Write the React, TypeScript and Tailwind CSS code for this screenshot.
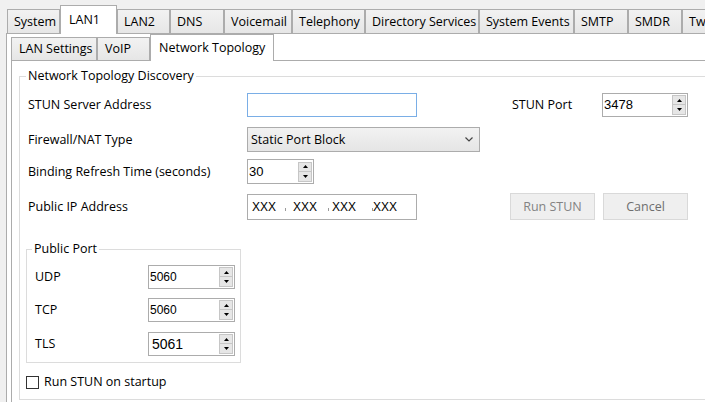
import React from "react";

const topTabs = [
  { label: "System", w: "w-[53px]", sel: false },
  { label: "LAN1", w: "w-[57px]", sel: true },
  { label: "LAN2", w: "w-[53px]", sel: false },
  { label: "DNS", w: "w-[54px]", sel: false },
  { label: "Voicemail", w: "w-[68px]", sel: false },
  { label: "Telephony", w: "w-[73px]", sel: false },
  { label: "Directory Services", w: "w-[114px]", sel: false },
  { label: "System Events", w: "w-[95px]", sel: false },
  { label: "SMTP", w: "w-[54px]", sel: false },
  { label: "SMDR", w: "w-[54px]", sel: false },
  { label: "Twinning", w: "w-[80px]", sel: false },
];

const innerTabs = [
  { label: "LAN Settings", w: "w-[86px]", sel: false },
  { label: "VoIP", w: "w-[53px]", sel: false },
  { label: "Network Topology", w: "w-[124px]", sel: true },
];

function Tri({ down }: { down?: boolean }) {
  return (
    <svg width="5" height="3" viewBox="0 0 5 3" className="block">
      {down ? <polygon points="0,0 5,0 2.5,3" fill="#000" /> : <polygon points="0,3 5,3 2.5,0" fill="#000" />}
    </svg>
  );
}

function Spin({ w, h, value, cls }: { w: string; h: string; value: string; cls: string }) {
  return (
    <div className={`flex items-stretch border border-[#acacac] bg-white ${w} ${h}`}>
      <div className={`flex-1 flex items-center font-['Liberation_Sans',Arial,sans-serif] ${cls}`}>{value}</div>
      <div className="flex flex-col justify-center w-[14px] mr-[1px]">
        <div className="h-[10px] flex items-center justify-center border border-[#c6c6c6] bg-[#e6e6e6]">
          <Tri />
        </div>
        <div className="h-[10px] flex items-center justify-center border border-t-0 border-[#c6c6c6] bg-[#e6e6e6]">
          <Tri down />
        </div>
      </div>
    </div>
  );
}

function Dot() {
  return <div className="w-[1px] h-[3px] mt-[5px] bg-[#9a9a9a]" />;
}

export default function App() {
  return (
    <div className="w-[705px] h-[402px] overflow-hidden bg-[#f0f0f0] text-[12.5px] leading-[16px] text-black font-['Open_Sans',sans-serif]">
      {/* top tabs */}
      <div className="flex items-end h-[33px] pl-[7px]">
        {topTabs.map((t) =>
          t.sel ? (
            <div
              key={t.label}
              className={`relative z-10 -mb-px h-[29px] shrink-0 flex items-center pl-[8px] border border-b-0 border-[#acacac] bg-white ${t.w}`}
            >
              {t.label}
            </div>
          ) : (
            <div
              key={t.label}
              className={`h-[24px] shrink-0 flex items-center pl-[6px] border border-b-0 border-[#acacac] bg-linear-to-b from-[#f2f2f2] to-[#e6e6e6] ${t.w}`}
            >
              {t.label}
            </div>
          )
        )}
      </div>

      {/* outer panel */}
      <div className="ml-[6px] h-[369px] w-[720px] border-l border-t border-[#acacac] bg-white">
        <div className="flex items-end h-[26px] pl-[4px]">
          {innerTabs.map((t) =>
            t.sel ? (
              <div
                key={t.label}
                className={`relative z-10 -mb-px h-[27px] shrink-0 flex items-center pl-[8px] border border-b-0 border-[#acacac] bg-white ${t.w}`}
              >
                {t.label}
              </div>
            ) : (
              <div
                key={t.label}
                className={`h-[23px] shrink-0 flex items-center pl-[7px] border border-b-0 border-[#acacac] bg-linear-to-b from-[#f2f2f2] to-[#e6e6e6] ${t.w}`}
              >
                {t.label}
              </div>
            )
          )}
        </div>

        {/* inner panel */}
        <div className="ml-[4px] h-[360px] border-l border-t border-[#acacac] bg-white pt-[7px] pl-[7px]">
          <fieldset className="w-[720px] border border-[#dcdcdc]">
            <legend className="ml-[6px] px-[2px]">Network Topology Discovery</legend>
            <div className="flex flex-col pt-[9px] pb-[9px]">
              {/* row 1 */}
              <div className="flex items-center h-[24px] pl-[8px]">
                <div className="w-[219px] shrink-0">STUN Server Address</div>
                <div className="w-[170px] h-[24px] shrink-0 border border-[#7aaee6] bg-white" />
                <div className="ml-[95px] w-[90px] shrink-0">STUN Port</div>
                <Spin w="w-[86px]" h="h-[24px]" value="3478" cls="text-[13px] pl-[1px]" />
              </div>
              {/* row 2 */}
              <div className="flex items-center h-[25px] mt-[10px] pl-[8px]">
                <div className="w-[219px] shrink-0">Firewall/NAT Type</div>
                <div className="w-[233px] h-[25px] shrink-0 flex items-center pl-[3px] border border-[#acacac] bg-linear-to-b from-[#f2f2f2] to-[#e5e5e5]">
                  <div className="flex-1">Static Port Block</div>
                  <svg width="8" height="5" viewBox="0 0 8 5" className="mr-[6px]">
                    <polyline points="0.5,0.5 4,4 7.5,0.5" fill="none" stroke="#444" strokeWidth="1.2" />
                  </svg>
                </div>
              </div>
              {/* row 3 */}
              <div className="flex items-center h-[25px] mt-[7px] pl-[8px]">
                <div className="w-[219px] shrink-0">Binding Refresh Time (seconds)</div>
                <Spin w="w-[67px]" h="h-[25px]" value="30" cls="text-[13px] pl-[1px]" />
              </div>
              {/* row 4 */}
              <div className="flex items-center h-[27px] mt-[9px] pl-[8px]">
                <div className="w-[219px] shrink-0">Public IP Address</div>
                <div className="w-[170px] h-[26px] shrink-0 flex items-center pl-[4px] border border-[#acacac] bg-white font-['Liberation_Sans',Arial,sans-serif] text-[12px]">
                  <div className="w-[33px]">XXX</div>
                  <Dot />
                  <div className="w-[35px] ml-[7px]">XXX</div>
                  <Dot />
                  <div className="w-[40px] ml-[3px]">XXX</div>
                  <Dot />
                  <div>XXX</div>
                </div>
                <div className="ml-[93px] w-[85px] h-[27px] shrink-0 flex items-center justify-center border border-[#d9d9d9] bg-[#efefef] text-[#838383]">
                  Run STUN
                </div>
                <div className="ml-[8px] w-[85px] h-[27px] shrink-0 flex items-center justify-center border border-[#d9d9d9] bg-[#efefef] text-[#6e6e6e]">
                  Cancel
                </div>
              </div>

              {/* Public Port group */}
              <fieldset className="ml-[6px] mt-[21px] w-[215px] border border-[#dcdcdc]">
                <legend className="ml-[5px] px-[2px]">Public Port</legend>
                <div className="flex flex-col pt-[8px] pb-[6px]">
                  <div className="flex items-center h-[24px] pl-[8px]">
                    <div className="w-[113px] shrink-0">UDP</div>
                    <Spin w="w-[87px]" h="h-[24px]" value="5060" cls="text-[12px] pl-[1px]" />
                  </div>
                  <div className="flex items-center h-[24px] mt-[9px] pl-[8px]">
                    <div className="w-[113px] shrink-0">TCP</div>
                    <Spin w="w-[87px]" h="h-[24px]" value="5060" cls="text-[12px] pl-[1px]" />
                  </div>
                  <div className="flex items-center h-[24px] mt-[10px] pl-[8px]">
                    <div className="w-[113px] shrink-0">TLS</div>
                    <Spin w="w-[87px]" h="h-[24px]" value="5061" cls="text-[14px] pl-[3px]" />
                  </div>
                </div>
              </fieldset>

              {/* checkbox */}
              <div className="flex items-center h-[16px] mt-[11px] ml-[6px]">
                <div className="w-[13px] h-[13px] shrink-0 border border-[#333] bg-white" />
                <div className="ml-[5px]">Run STUN on startup</div>
              </div>
            </div>
          </fieldset>
        </div>
      </div>
    </div>
  );
}
